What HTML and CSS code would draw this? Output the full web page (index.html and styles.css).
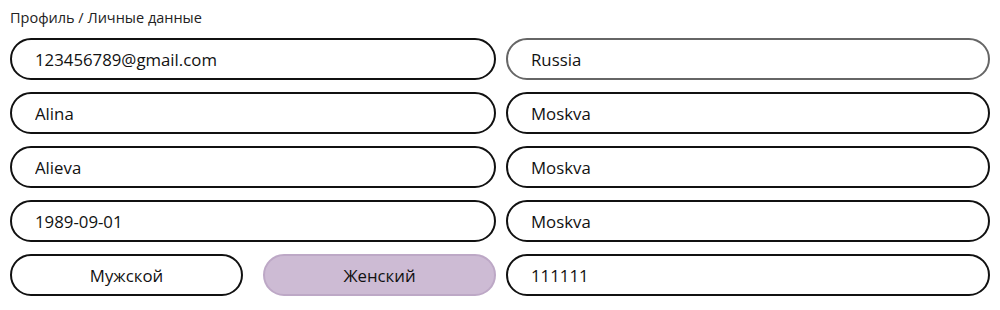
FILE: index.html
```html
<!DOCTYPE html>
<html lang="ru">
<head>
  <meta charset="UTF-8">
  <meta name="viewport" content="width=device-width, initial-scale=1.0">
  <title>Профиль</title>
  <link rel="stylesheet" href="styles.css">
</head>
<body>
  <div class="crumbs">Профиль / Личные данные</div>
  <form class="profile">
    <div class="col">
      <input class="field" type="text" value="123456789@gmail.com">
      <input class="field" type="text" value="Alina">
      <input class="field" type="text" value="Alieva">
      <input class="field" type="text" value="1989-09-01">
      <div class="gender">
        <button type="button" class="pill">Мужской</button>
        <button type="button" class="pill active">Женский</button>
      </div>
    </div>
    <div class="col">
      <input class="field muted" type="text" value="Russia">
      <input class="field" type="text" value="Moskva">
      <input class="field" type="text" value="Moskva">
      <input class="field" type="text" value="Moskva">
      <input class="field" type="text" value="111111">
    </div>
  </form>
</body>
</html>
```

FILE: styles.css
```css
body {
  font-family: "Open Sans", "Noto Sans", sans-serif;
  margin: 0;
  padding: 8px 10px 0 10px;
  color: #111;
  background: #fff;
}
.crumbs {
  font-size: 14.5px;
  color: #222;
  line-height: 20px;
  margin-bottom: 10px;
}
.profile {
  display: grid;
  grid-template-columns: 486px 484px;
  column-gap: 10px;
}
.col {
  display: flex;
  flex-direction: column;
  gap: 12px;
}
.field {
  box-sizing: border-box;
  height: 42px;
  width: 100%;
  padding: 0 23px;
  border: 2px solid #111;
  border-radius: 21px;
  font-family: inherit;
  font-size: 16.8px;
  color: #111;
  background: #fff;
  outline: none;
}
.field.muted {
  border-color: #666;
}
.gender {
  display: grid;
  grid-template-columns: 1fr 1fr;
  column-gap: 20px;
}
.pill {
  box-sizing: border-box;
  height: 42px;
  border: 2px solid #111;
  border-radius: 21px;
  background: #fff;
  font-family: inherit;
  font-size: 16.8px;
  color: #111;
  cursor: pointer;
}
.pill.active {
  background: #cdbbd4;
  border-color: #bda8c6;
}
```
